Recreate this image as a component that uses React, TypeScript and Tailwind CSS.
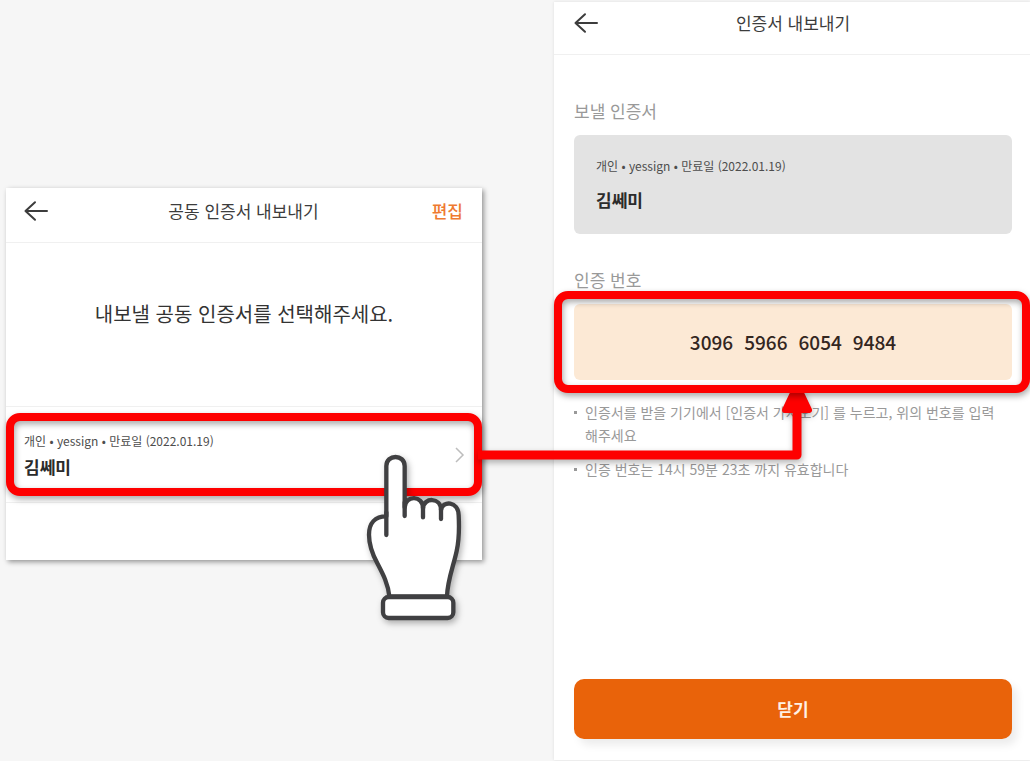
const certificate = {
  info: "개인 • yessign • 만료일 (2022.01.19)",
  owner: "김쎄미",
};

const codeGroups = ["3096", "5966", "6054", "9484"];

function BackButton() {
  return (
    <button type="button" aria-label="뒤로" className="flex h-6 w-6 items-center justify-center">
      <svg
        viewBox="0 0 24 24"
        className="h-6 w-6 shrink-0"
        fill="none"
        stroke="#3c3c3c"
        strokeWidth="2"
        strokeLinecap="round"
        strokeLinejoin="round"
        aria-hidden="true"
      >
        <path d="M23 12H1.5M11 3.2 1.5 12l9.500 8.800" />
      </svg>
    </button>
  );
}

function PointingHand() {
  return (
    <svg
      viewBox="66 156 312 528"
      className="pointer-events-none absolute top-11 right-4 h-[176px] w-[104px] drop-shadow-[2px_3px_3px_rgba(0,0,0,0.3)]"
      stroke="#404042"
      strokeWidth="13"
      strokeLinecap="round"
      strokeLinejoin="round"
      aria-hidden="true"
    >
      <path
        fill="#fff"
        d="M148 592C144 553 128 524 112 493C95 461 87 434 87 407C87 372 105 352 139 352V201C139 165 194 165 194 201V325C196 288 249 288 249 328C251 294 303 294 303 333C308 303 355 307 356 349C358 389 358 421 350 456C341 499 322 545 321 592Z"
      />
      <path fill="none" d="M139 340V408M194 310V351M249 325V355M303 330V360" />
      <rect x="129" y="594" width="211" height="63" rx="17" fill="#fff" />
    </svg>
  );
}

function ConnectorArrow() {
  return (
    <svg
      viewBox="482 390 336 78"
      className="pointer-events-none absolute top-[86px] -left-[92px] h-[78px] w-[336px] overflow-visible drop-shadow-[1px_3px_3px_rgba(0,0,0,0.3)]"
      fill="none"
      stroke="#fe0000"
      strokeLinejoin="round"
      aria-hidden="true"
    >
      <path d="M478 455H797V408" strokeWidth="9" />
      <path d="M794 391H800L809 410H785Z" strokeWidth="6" fill="#fe0000" />
    </svg>
  );
}

function SelectScreen() {
  return (
    <section className="mt-[188px] min-w-0 flex-1 bg-white shadow-[2px_2px_5px_rgba(0,0,0,0.4)]">
      <header className="flex h-[55px] items-center justify-between border-b border-[#f0f0f0] pr-[19px] pl-[18px] pb-2">
        <div className="flex flex-1">
          <BackButton />
        </div>
        <h1 className="text-[17px] text-[#3c3c3c]">공동 인증서 내보내기</h1>
        <div className="flex flex-1 justify-end">
          <button type="button" className="text-[17px] font-medium text-[#ef7a30]">
            편집
          </button>
        </div>
      </header>
      <h2 className="pt-[55px] pb-[76px] text-center text-[20px] leading-8 text-[#333]">
        내보낼 공동 인증서를 선택해주세요.
      </h2>
      <div className="relative mb-[57px] border-y border-[#f0f0f0]">
        <button type="button" className="flex w-full items-center justify-between pt-6 pr-4 pb-[23px] pl-[18px] text-left">
          <span className="flex flex-col">
            <span className="text-[12px] leading-5 text-[#4d4d4d]">{certificate.info}</span>
            <span className="pt-1 text-[17px] leading-6 font-bold text-[#2b2b2b]">{certificate.owner}</span>
          </span>
          <svg
            viewBox="0 0 12 18"
            className="h-[18px] w-3"
            fill="none"
            stroke="#bdbdbd"
            strokeWidth="1.5"
            aria-hidden="true"
          >
            <path d="M2 2 9 9 2 16" />
          </svg>
        </button>
        <div className="pointer-events-none absolute inset-x-0 top-1.5 bottom-1.5 rounded-[14px] border-8 border-[#fe0000] drop-shadow-[1px_3px_3px_rgba(0,0,0,0.35)]" />
        <PointingHand />
      </div>
    </section>
  );
}

function ExportScreen() {
  return (
    <section className="mt-0.5 flex min-h-[758px] min-w-0 flex-1 flex-col bg-white shadow-[0_0_3px_rgba(0,0,0,0.1)]">
      <header className="flex h-[53px] items-center border-b border-[#f0f0f0] pr-[18px] pl-5 pb-2.5">
        <div className="flex flex-1">
          <BackButton />
        </div>
        <h1 className="text-[17px] text-[#3c3c3c]">인증서 내보내기</h1>
        <div className="flex-1" />
      </header>
      <div className="flex flex-1 flex-col pt-11 pr-[18px] pb-[21px] pl-5">
        <h2 className="text-[17px] leading-6 text-[#999]">보낼 인증서</h2>
        <div className="mt-3 rounded-md bg-[#e3e3e3] px-[22px] pt-[21px] pb-[22px]">
          <p className="text-[12px] leading-5 text-[#4d4d4d]">{certificate.info}</p>
          <p className="mt-3 text-[17px] leading-6 font-bold text-[#2b2b2b]">{certificate.owner}</p>
        </div>
        <h2 className="mt-[34px] text-[17px] leading-6 text-[#999]">인증 번호</h2>
        <div className="relative mt-3 h-[76px]">
          <p className="flex h-full items-center justify-center gap-[11px] rounded-md bg-[#fce9d5] text-[19px] font-medium text-[#33261f]">
            {codeGroups.map((group) => (
              <span key={group}>{group}</span>
            ))}
          </p>
          <div className="pointer-events-none absolute -top-[13px] -right-[18px] -bottom-[13px] -left-5 z-10 rounded-[14px] border-8 border-[#fe0000] drop-shadow-[1px_3px_3px_rgba(0,0,0,0.35)]" />
          <ConnectorArrow />
        </div>
        <ul className="flex flex-col gap-[11px] pt-[21px] text-[14px] leading-[23px] text-[#999]">
          <li className="flex gap-2">
            <span className="mt-2.5 h-[3px] w-[3px] shrink-0 bg-[#999]" />
            <span>
              인증서를 받을 기기에서 [인증서 가져오기] 를 누르고, 위의 번호를 입력
              <br />
              해주세요
            </span>
          </li>
          <li className="flex gap-2">
            <span className="mt-2.5 h-[3px] w-[3px] shrink-0 bg-[#999]" />
            <span>인증 번호는 14시 59분 23초 까지 유효합니다</span>
          </li>
        </ul>
        <button
          type="button"
          className="mt-auto h-[60px] rounded-[10px] bg-[#e9630a] text-[17px] font-bold text-[#fff1e4] shadow-[5px_6px_8px_rgba(0,0,0,0.08)]"
        >
          닫기
        </button>
      </div>
    </section>
  );
}

export default function App() {
  return (
    <main
      lang="ko"
      className="flex min-h-screen items-start gap-[72px] overflow-hidden bg-[#f6f6f6] pl-1.5 font-['Noto_Sans_CJK_KR',sans-serif]"
    >
      <SelectScreen />
      <ExportScreen />
    </main>
  );
}
